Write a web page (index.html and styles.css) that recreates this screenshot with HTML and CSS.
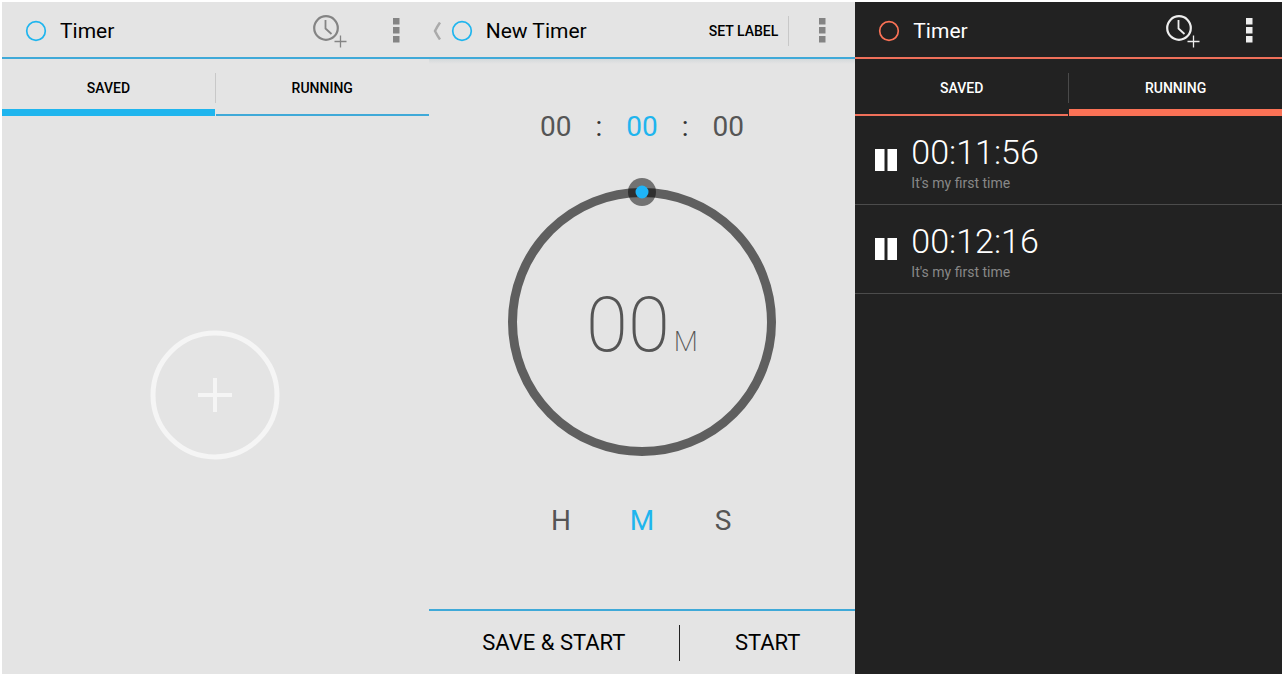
FILE: index.html
```
<!DOCTYPE html>
<html lang="en">

<head>
    <meta charset="UTF-8">
    <meta name="viewport" content="width=device-width, initial-scale=1.0">
    <title>Timer</title>
    <link rel="stylesheet" href="styles.css">
</head>

<body>
    <!-- Saved timers -->
    <section class="screen">
        <header class="action-bar">
            <svg class="logo" viewBox="0 0 22 22"><circle cx="11" cy="11" r="9.3" /></svg>
            <h1>Timer</h1>
            <button class="icon-btn add-btn" aria-label="Add timer">
                <svg width="34" height="34" viewBox="0 0 34 34">
                    <circle cx="13" cy="14" r="11.8" stroke-width="2.2" />
                    <path d="M12.5 6v8.500l6 5.500" stroke-width="1.800" />
                    <path d="M27.500 21.500v12M21.500 27.500h12" stroke-width="1.300" />
                </svg>
            </button>
            <button class="icon-btn" aria-label="More options">
                <svg class="dots" width="7" height="25" viewBox="0 0 7 25">
                    <path d="M0 0h6.500v6.500H0zM0 9h6.500v6.500H0zM0 18h6.500v6.500H0z" />
                </svg>
            </button>
        </header>
        <nav class="tabs">
            <button class="tab active">SAVED</button>
            <span class="divider"></span>
            <button class="tab">RUNNING</button>
        </nav>
        <main class="empty">
            <button class="icon-btn" aria-label="New timer">
                <svg width="130" height="130" viewBox="0 0 130 130">
                    <circle cx="65" cy="65" r="62" stroke-width="5" />
                    <path d="M65 48v34M48 65h34" stroke-width="4" />
                </svg>
            </button>
        </main>
    </section>

    <!-- New timer -->
    <section class="screen">
        <header class="action-bar sub">
            <button class="icon-btn" aria-label="Back">
                <svg class="back" width="9" height="18" viewBox="0 0 9 18">
                    <path d="M7 0.500Q4.500 4 2 9Q4.500 14 7 17.500" stroke-width="2.500" />
                </svg>
            </button>
            <svg class="logo" viewBox="0 0 22 22"><circle cx="11" cy="11" r="9.3" /></svg>
            <h1>New Timer</h1>
            <button class="label-btn">SET LABEL</button>
            <span class="divider"></span>
            <button class="icon-btn" aria-label="More options">
                <svg class="dots" width="7" height="25" viewBox="0 0 7 25">
                    <path d="M0 0h6.500v6.500H0zM0 9h6.500v6.500H0zM0 18h6.500v6.500H0z" />
                </svg>
            </button>
        </header>
        <main class="picker">
            <div class="digits">
                <span>00</span>
                <span class="colon">:</span>
                <span class="selected">00</span>
                <span class="colon">:</span>
                <span>00</span>
            </div>
            <div class="dial">
                <svg width="288" height="288" viewBox="0 0 288 288">
                    <circle class="ring" cx="144" cy="144" r="129.5" />
                    <circle class="knob" cx="144" cy="14" r="14" />
                    <circle class="knob-dot" cx="144" cy="14" r="6.5" />
                </svg>
                <div class="readout">00<small>M</small></div>
            </div>
            <div class="units">
                <button>H</button>
                <button class="selected">M</button>
                <button>S</button>
            </div>
        </main>
        <footer class="bottom-bar">
            <button class="save">SAVE &amp; START</button>
            <span class="divider"></span>
            <button class="start">START</button>
        </footer>
    </section>

    <!-- Running timers -->
    <section class="screen dark">
        <header class="action-bar">
            <svg class="logo" viewBox="0 0 22 22"><circle cx="11" cy="11" r="9.3" /></svg>
            <h1>Timer</h1>
            <button class="icon-btn add-btn" aria-label="Add timer">
                <svg width="34" height="34" viewBox="0 0 34 34">
                    <circle cx="13" cy="14" r="11.8" stroke-width="2.2" />
                    <path d="M12.5 6v8.500l6 5.500" stroke-width="1.800" />
                    <path d="M27.500 21.500v12M21.500 27.500h12" stroke-width="1.300" />
                </svg>
            </button>
            <button class="icon-btn" aria-label="More options">
                <svg class="dots" width="7" height="25" viewBox="0 0 7 25">
                    <path d="M0 0h6.500v6.500H0zM0 9h6.500v6.500H0zM0 18h6.500v6.500H0z" />
                </svg>
            </button>
        </header>
        <nav class="tabs">
            <button class="tab">SAVED</button>
            <span class="divider"></span>
            <button class="tab active">RUNNING</button>
        </nav>
        <ul class="timers">
            <li>
                <button class="icon-btn" aria-label="Pause">
                    <svg class="pause" width="22" height="22" viewBox="0 0 22 22">
                        <path d="M0 0h9.500v22H0zM12.500 0h9.500v22h-9.500z" />
                    </svg>
                </button>
                <div class="info">
                    <div class="time">00:11:56</div>
                    <div class="note">It's my first time</div>
                </div>
            </li>
            <li>
                <button class="icon-btn" aria-label="Pause">
                    <svg class="pause" width="22" height="22" viewBox="0 0 22 22">
                        <path d="M0 0h9.500v22H0zM12.500 0h9.500v22h-9.500z" />
                    </svg>
                </button>
                <div class="info">
                    <div class="time">00:12:16</div>
                    <div class="note">It's my first time</div>
                </div>
            </li>
        </ul>
    </section>
</body>

</html>
```
FILE: styles.css
```
* {
    box-sizing: border-box;
}

body {
    margin: 0;
    padding: 2px;
    min-height: 100vh;
    display: grid;
    grid-template-columns: repeat(3, 1fr);
    background: #fff;
    font-family: Roboto, "Liberation Sans", sans-serif;
}

button {
    margin: 0;
    padding: 0;
    border: 0;
    background: none;
    color: inherit;
    font: inherit;
    cursor: pointer;
}

svg {
    display: block;
    fill: none;
}

.screen {
    --accent: #1fb5ee;
    --line: #3fa9d8;
    --icon: #848484;
    --divider: #c8c8c8;
    display: flex;
    flex-direction: column;
    background: #e4e4e4;
    color: #000;
}

.dark {
    --accent: #fb7256;
    --line: #f0705a;
    --icon: #eee;
    --divider: #4a4a4a;
    background: #222;
    color: #fff;
}

/* Action bar */
.action-bar {
    display: flex;
    align-items: center;
    height: 57px;
    padding: 2px 29px 0 23px;
    border-bottom: 2px solid var(--line);
}

.action-bar.sub {
    padding-left: 4px;
}

.action-bar h1 {
    flex: 1;
    margin: 0 0 0 13px;
    font-size: 21px;
    line-height: 28px;
    font-weight: 400;
}

.logo {
    width: 22px;
    height: 22px;
    stroke: var(--accent);
    stroke-width: 1.7;
}

.back {
    margin-right: 9px;
    stroke: #aaa;
}

.add-btn {
    margin-right: 46px;
    stroke: var(--icon);
}

.dots {
    fill: var(--icon);
}

.divider {
    width: 1px;
    height: 30px;
    background: var(--divider);
}

.label-btn {
    margin-right: 10px;
    font-size: 14px;
    font-weight: 500;
}

.label-btn + .divider {
    margin-right: 30px;
}

/* Tabs */
.tabs {
    display: flex;
    align-items: center;
    height: 57px;
}

.tab {
    position: relative;
    flex: 1;
    height: 100%;
    font-size: 14px;
    font-weight: 500;
}

.tab::after {
    content: "";
    position: absolute;
    left: 0;
    right: 0;
    bottom: 0;
    height: 2px;
    background: var(--line);
}

.tab.active::after {
    height: 7px;
    background: var(--accent);
}

.empty {
    flex: 1;
    display: flex;
    align-items: center;
    justify-content: center;
}

.empty svg {
    stroke: #f5f5f5;
}

/* Time picker */
.picker {
    flex: 1;
    display: flex;
    flex-direction: column;
    align-items: center;
    padding-top: 52px;
    background: linear-gradient(#d4d9db, #e4e4e4 5px);
    color: #555;
    font-size: 28px;
    line-height: 32px;
}

.selected {
    color: var(--accent);
}

.digits {
    display: flex;
    gap: 24px;
}

.colon {
    color: #333;
}

.dial {
    display: grid;
    place-items: center;
    margin: 35px 0 39px;
}

.dial > * {
    grid-area: 1 / 1;
}

.ring {
    stroke: #5f5f5f;
    stroke-width: 9;
}

.knob {
    fill: rgba(0, 0, 0, 0.5);
}

.knob-dot {
    fill: #1fb5f8;
}

.readout {
    padding-top: 22px;
    font-size: 76px;
    line-height: 76px;
    font-weight: 200;
}

.readout small {
    margin-left: 4px;
    font-size: 28px;
}

.units {
    display: flex;
}

.units button {
    width: 81px;
}

.bottom-bar {
    display: flex;
    align-items: center;
    height: 65px;
    border-top: 2px solid var(--line);
    font-size: 22px;
}

.bottom-bar .divider {
    height: 36px;
    background: #222;
}

.save {
    flex: 10;
}

.start {
    flex: 7;
}

/* Running list */
.timers {
    margin: 0;
    padding: 0;
    list-style: none;
}

.timers li {
    display: flex;
    align-items: center;
    gap: 14px;
    height: 89px;
    padding-left: 20px;
    border-bottom: 1px solid #4c4c4c;
}

.pause {
    fill: #fff;
}

.info {
    padding-top: 6px;
}

.time {
    font-size: 34px;
    line-height: 40px;
    font-weight: 300;
}

.note {
    color: #888;
    font-size: 14px;
    line-height: 22px;
}
```
